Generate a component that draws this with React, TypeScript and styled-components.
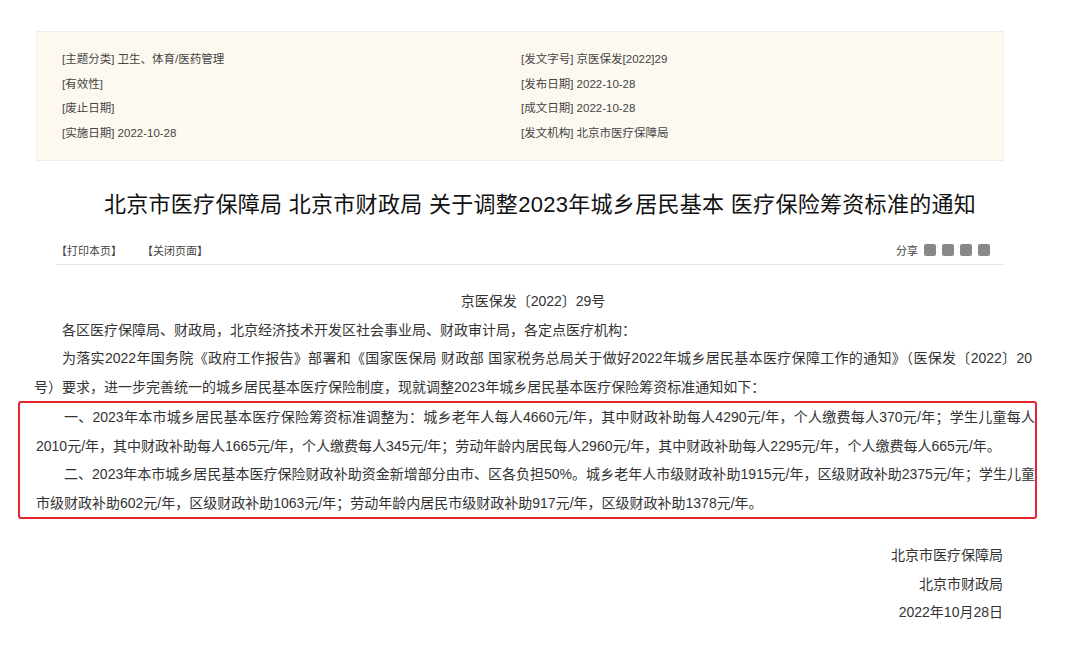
import React from "react";
import styled, { createGlobalStyle } from "styled-components";

const G = createGlobalStyle`
  body { margin: 0; background: #fff; font-family: "Liberation Sans", "Noto Sans CJK SC", sans-serif; color: #333; }
`;
const Page = styled.div`width: 1080px; height: 650px; overflow: hidden; position: relative;`;
const Info = styled.div`
  margin: 31px 0 0 36px; width: 968px; height: 130px; box-sizing: border-box;
  background: #fdf9f0; border: 1px solid #f1ede4; padding: 18px 0 0 25px;
  display: grid; grid-template-columns: 459px 1fr; grid-auto-rows: 24.5px;
  font-size: 11.5px; color: #444;
`;
const Title = styled.h1`
  margin: 25px 0 0; text-align: center; font-size: 22px; font-weight: 400; color: #111; letter-spacing: 0.3px;
`;
const Tool = styled.div`
  margin: 18px 0 0 56px; width: 948px; height: 28px; border-bottom: 1px solid #e6e6e6;
  display: flex; align-items: center; font-size: 11px; color: #444; gap: 20px;
`;
const Share = styled.div`margin-left: auto; display: flex; align-items: center; gap: 6px; padding-right: 14px;`;
const Ic = styled.span`width: 12px; height: 12px; background: #888; border-radius: 2px; display: inline-block;`;
const Body = styled.div`padding: 22px 48px 0 34px; font-size: 14px; line-height: 28.5px; color: #333;`;
const P = styled.p<{ center?: boolean }>`margin: 0; text-indent: ${p => p.center ? 0 : "28px"}; text-align: ${p => p.center ? "center" : "justify"};`;
const Box = styled.div`
  margin: 0 0 0 -16px; width: 1019px; box-sizing: border-box; padding: 0 0 0 16px;
  border: 2px solid #e5272d; border-radius: 3px;
`;
const Sign = styled.div`padding: 22px 77px 0 0; text-align: right; font-size: 14px; line-height: 28.5px; color: #333;`;

export default function App() {
  return (
    <Page>
      <G />
      <Info>
        <div>[主题分类] 卫生、体育/医药管理</div><div>[发文字号] 京医保发[2022]29</div>
        <div>[有效性]</div><div>[发布日期] 2022-10-28</div>
        <div>[废止日期]</div><div>[成文日期] 2022-10-28</div>
        <div>[实施日期] 2022-10-28</div><div>[发文机构] 北京市医疗保障局</div>
      </Info>
      <Title>北京市医疗保障局 北京市财政局 关于调整2023年城乡居民基本 医疗保险筹资标准的通知</Title>
      <Tool>
        <span>【打印本页】</span><span>【关闭页面】</span>
        <Share>分享 <Ic /><Ic /><Ic /><Ic /></Share>
      </Tool>
      <Body>
        <P center>京医保发〔2022〕29号</P>
        <P>各区医疗保障局、财政局，北京经济技术开发区社会事业局、财政审计局，各定点医疗机构：</P>
        <P>为落实2022年国务院《政府工作报告》部署和《国家医保局 财政部 国家税务总局关于做好2022年城乡居民基本医疗保障工作的通知》（医保发〔2022〕20号）要求，进一步完善统一的城乡居民基本医疗保险制度，现就调整2023年城乡居民基本医疗保险筹资标准通知如下：</P>
        <Box>
          <P>一、2023年本市城乡居民基本医疗保险筹资标准调整为：城乡老年人每人4660元/年，其中财政补助每人4290元/年，个人缴费每人370元/年；学生儿童每人2010元/年，其中财政补助每人1665元/年，个人缴费每人345元/年；劳动年龄内居民每人2960元/年，其中财政补助每人2295元/年，个人缴费每人665元/年。</P>
          <P>二、2023年本市城乡居民基本医疗保险财政补助资金新增部分由市、区各负担50%。城乡老年人市级财政补助1915元/年，区级财政补助2375元/年；学生儿童市级财政补助602元/年，区级财政补助1063元/年；劳动年龄内居民市级财政补助917元/年，区级财政补助1378元/年。</P>
        </Box>
      </Body>
      <Sign>
        <div>北京市医疗保障局</div>
        <div>北京市财政局</div>
        <div>2022年10月28日</div>
      </Sign>
    </Page>
  );
}
